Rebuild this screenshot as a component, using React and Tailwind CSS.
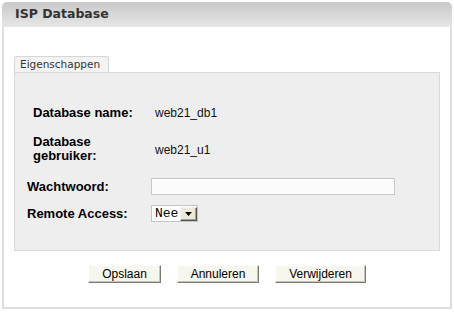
import React from "react";

function Btn({ w, children }) {
  return (
    <button
      className={`h-[18px] ${w} border border-t-white border-l-white border-r-[#7a7a72] border-b-[#7a7a72] bg-[#f6f6ef] text-[12px] leading-[16px] text-black shadow-[inset_-1px_-1px_0_#c4c4bc] font-['Liberation_Sans',Arial,sans-serif]`}
    >
      {children}
    </button>
  );
}

export default function App() {
  return (
    <div className="bg-white w-[454px] h-[312px] pt-[2px] pl-[2px]">
      <div className="w-[450px]">
        <div className="h-[25px] rounded-t-[5px] bg-gradient-to-b from-[#c9c9c9] to-[#e6e6e6] flex items-center pl-[13px]">
          <span className="text-[12.5px] font-bold text-[#333] font-['DejaVu_Sans',Verdana,sans-serif]">
            ISP Database
          </span>
        </div>
        <div className="h-[282px] border-x-2 border-b-2 border-[#dedede] bg-white pt-[29px] px-[10px]">
          <div className="w-[95px] h-[16px] border border-b-0 border-[#d6d6d6] rounded-t-[3px] bg-[#f3f3f3] px-[5px] text-[10.5px] leading-[15px] text-[#333] font-['DejaVu_Sans',Verdana,sans-serif]">
            Eigenschappen
          </div>
          <div className="h-[179px] border border-[#d9d9d9] bg-[#eeeeee] pt-[33px] font-['Liberation_Sans',Arial,sans-serif]">
            <div className="pl-[18px] flex flex-col gap-[17px]">
              <div className="flex items-center h-[13px]">
                <div className="w-[122px] text-[13px] leading-[13px] font-bold text-black">Database name:</div>
                <div className="text-[12px] leading-[14px] text-[#111]">web21_db1</div>
              </div>
              <div className="flex items-center h-[26px]">
                <div className="w-[122px] flex flex-col text-[13px] leading-[12.5px] font-bold text-black">
                  <span>Database</span>
                  <span className="pt-[1px]">gebruiker:</span>
                </div>
                <div className="text-[12px] leading-[14px] text-[#111] pt-[1px]">web21_u1</div>
              </div>
            </div>
            <div className="pl-[12px] mt-[16px] flex flex-col gap-[10px]">
              <div className="flex items-center h-[17px]">
                <div className="w-[124px] text-[13px] leading-[13px] font-bold text-black">Wachtwoord:</div>
                <div className="w-[244px] h-[17px] border border-[#c8c8c8] bg-[#fbfbfb]" />
              </div>
              <div className="flex items-center h-[17px]">
                <div className="w-[124px] text-[13px] leading-[13px] font-bold text-black">Remote Access:</div>
                <div className="w-[47px] h-[17px] border border-[#c4c4c4] bg-white flex items-center">
                  <span className="pl-[3px] w-[28px] text-[13px] leading-[15px] text-black font-['Liberation_Mono','Courier_New',monospace]">
                    Nee
                  </span>
                  <div className="w-[17px] h-[14px] border border-t-[#f4f4f0] border-l-[#f4f4f0] border-r-[#555] border-b-[#555] bg-[#ece9d8] shadow-[inset_-1px_-1px_0_#a0a09a] flex items-center justify-center">
                    <svg width="7" height="4" viewBox="0 0 7 4">
                      <path d="M0 0H7L3.5 4Z" fill="#000" />
                    </svg>
                  </div>
                </div>
              </div>
            </div>
          </div>
          <div className="mt-[14px] flex justify-center gap-[16px]">
            <Btn w="w-[73px]">Opslaan</Btn>
            <Btn w="w-[82px]">Annuleren</Btn>
            <Btn w="w-[91px]">Verwijderen</Btn>
          </div>
        </div>
      </div>
    </div>
  );
}
